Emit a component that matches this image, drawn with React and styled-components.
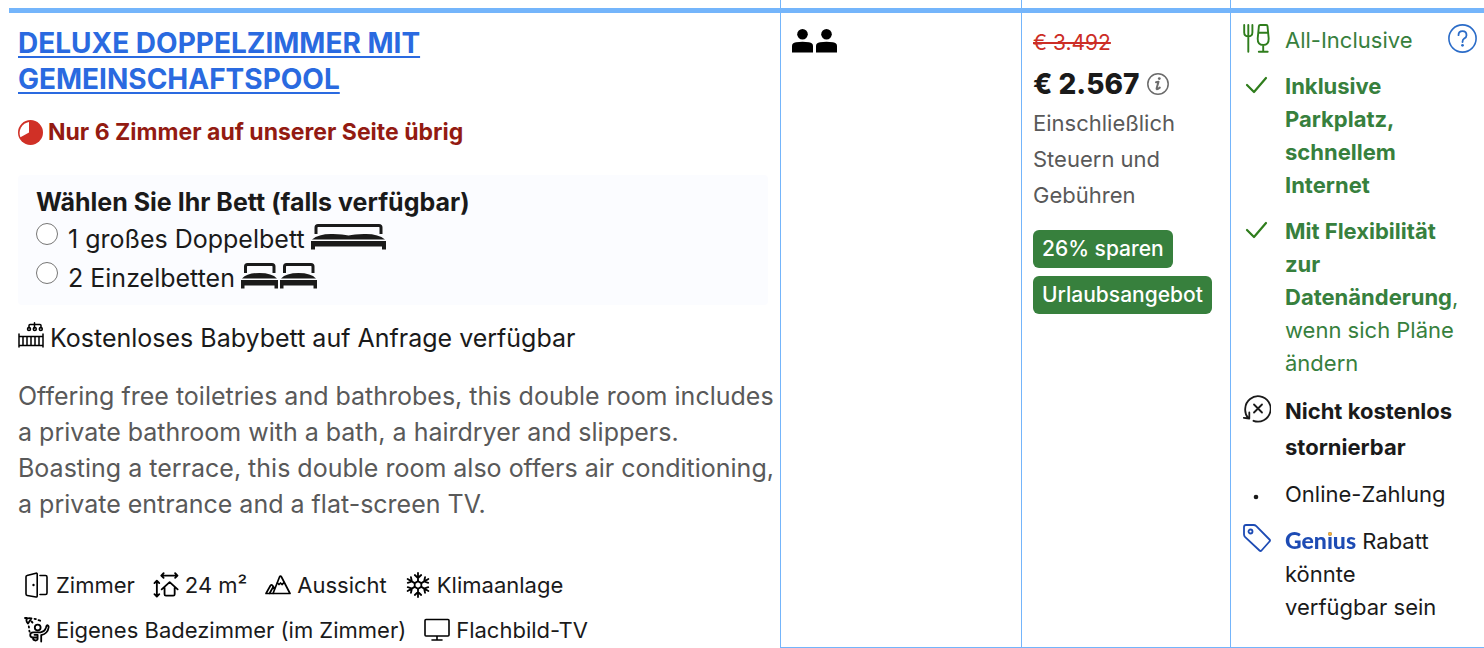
import React from "react";
import styled, { createGlobalStyle, css } from "styled-components";

const color = {
  line: "#74b5fb",
  link: "#2a6ae0",
  text: "#1a1a1a",
  muted: "#595959",
  green: "#37803d",
  iconGreen: "#2f7d1c",
  danger: "#931b12",
  strike: "#cc2d25",
  genius: "#1d4bb4",
  geniusDot: "#f8b133",
  help: "#2b6cc8",
};

const GlobalStyle = createGlobalStyle`
  * { box-sizing: border-box; }
  body {
    margin: 0;
    background: #fff;
    color: ${color.text};
    font-family: Inter, "Liberation Sans", sans-serif;
    font-size: 22px;
    line-height: 36px;
  }
`;

const RoomTable = styled.table`
  width: calc(100% - 9px);
  margin-left: 9px;
  border-collapse: separate;
  border-spacing: 0;
  table-layout: fixed;
`;

const Column = styled.col`
  width: ${(p) => p.$width || "auto"};
`;

const SpacerCell = styled.td`
  height: 8px;
  padding: 0;
  border-left: ${(p) => (p.$first ? "0" : `1px solid ${color.line}`)};
`;

const Cell = styled.td`
  vertical-align: top;
  border-top: 5px solid ${color.line};
  padding: ${(p) => p.$padding};
  ${(p) =>
    !p.$first &&
    css`
      border-left: 1px solid ${color.line};
      border-bottom: 1px solid ${color.line};
    `}
`;

const Icon = styled.svg`
  display: block;
  flex: none;
  fill: none;
  stroke: currentColor;
  stroke-linecap: round;
  stroke-linejoin: round;
`;

const RoomName = styled.h3`
  margin: 0;
  max-width: 480px;
  font-size: 28px;
  font-weight: 700;
  line-height: 36px;
`;

const RoomLink = styled.a`
  color: ${color.link};
  text-decoration: underline;
  text-decoration-thickness: 2px;
  text-underline-offset: 3px;
`;

const Scarcity = styled.p`
  display: flex;
  align-items: center;
  gap: 5px;
  margin: 17px 0 25px;
  color: ${color.danger};
  font-size: 23px;
  font-weight: 700;
`;

const BedChoice = styled.fieldset`
  margin: 0 8px 0 0;
  min-width: 0;
  padding: 9px 18px 7px;
  border: 0;
  border-radius: 4px;
  background: #fbfcff;
`;

const BedTitle = styled.legend`
  float: left;
  width: 100%;
  padding: 0;
  font-size: 25px;
  font-weight: 700;
`;

const BedOption = styled.label`
  display: flex;
  clear: both;
  align-items: flex-start;
  gap: 10px;
  height: 39px;
  font-size: 25px;
  line-height: 39px;
`;

const BedRadio = styled.input`
  flex: none;
  width: 22px;
  height: 22px;
  margin: 3px 0 0;
`;

const BedLabel = styled.span`
  display: flex;
  gap: 6px;
`;

const BedIcon = styled(Icon)`
  margin-top: 4px;
`;

const CribNote = styled.p`
  display: flex;
  align-items: center;
  gap: 6px;
  margin: 15px 0 22px;
  font-size: 25px;
`;

const CribDrawing = styled(Icon)`
  margin-bottom: 6px;
`;

const Description = styled.p`
  margin: 0;
  color: ${color.muted};
  font-size: 25px;
`;

const Features = styled.ul`
  display: flex;
  flex-wrap: wrap;
  gap: 9px 18px;
  max-width: 620px;
  margin: 45px 0 0;
  padding: 0 0 0 6px;
  list-style: none;
`;

const Feature = styled.li`
  display: flex;
  align-items: center;
  gap: 6px;
`;

const Guests = styled.div`
  display: flex;
  gap: 3px;
  color: #000;
`;

const OldPrice = styled.del`
  display: block;
  color: ${color.strike};
  font-size: 21px;
  text-decoration-thickness: 2px;
`;

const PriceLine = styled.div`
  display: flex;
  align-items: center;
  gap: 8px;
  margin-top: 2px;
  line-height: 42px;
`;

const Price = styled.strong`
  font-size: 28px;
  font-weight: 800;
`;

const IconButton = styled.button`
  display: flex;
  align-self: ${(p) => p.$align || "center"};
  padding: 0;
  border: 0;
  background: none;
  color: ${(p) => p.$color};
  cursor: pointer;
`;

const TaxNote = styled.p`
  max-width: 160px;
  margin: 0 0 17px;
  color: ${color.muted};
`;

const Badges = styled.div`
  display: flex;
  flex-direction: column;
  align-items: flex-start;
  gap: 8px;
`;

const Badge = styled.span`
  padding: 0 9px;
  border-radius: 6px;
  background: ${color.green};
  color: #fff;
  font-size: 21px;
  font-weight: 500;
  line-height: 38px;
`;

const Conditions = styled.ul`
  display: flex;
  flex-direction: column;
  gap: 13px;
  margin: 0;
  padding: 0;
  list-style: none;
`;

const Condition = styled.li`
  display: flex;
  gap: 14px;
  color: ${(p) => p.$color || color.text};
  line-height: ${(p) => p.$lineHeight || "33px"};
`;

const ConditionIcon = styled.span`
  display: flex;
  flex: none;
  justify-content: center;
  width: 28px;
  height: 33px;
  color: ${(p) => p.$color};
`;

const ConditionText = styled.span`
  flex: 1;
  min-width: 0;
  padding-right: 16px;
`;

/* The wordmark's i carries a yellow dot: the only ink above the x-height after "Ge". */
const Genius = styled.span`
  background:
    linear-gradient(${color.geniusDot}, ${color.geniusDot}) 36px 0 / 100% 10px no-repeat,
    ${color.genius};
  background-clip: text;
  color: transparent;
  font-family: Lato, sans-serif;
  font-size: 23px;
  font-weight: 900;
`;

const DoubleBed = () => (
  <BedIcon width="75" height="26" viewBox="0 0 75 26" aria-hidden="true">
    <path d="M5 10V3.500q0-2 2-2H68q2 0 2 2V10" strokeWidth="3" strokeLinecap="butt" />
    <path d="M1 15.500Q8 9.500 22 10q10 .3 15.500 1.500Q43 10.300 53 10q14-.5 21 5.500z" fill="currentColor" stroke="none" />
    <path d="M0 17H75V25.500H71V22.500H4V25.500H0z" fill="currentColor" stroke="none" />
  </BedIcon>
);

const TwinBeds = () => (
  <BedIcon width="76" height="26" viewBox="0 0 76 26" aria-hidden="true">
    {[0, 39].map((x) => (
      <g key={x} transform={`translate(${x} 0)`}>
        <path d="M4.500 10V3.500q0-2 2-2H31q2 0 2 2V10" strokeWidth="3" strokeLinecap="butt" />
        <path d="M1 15.500Q6 10 18.500 10T36 15.500z" fill="currentColor" stroke="none" />
        <path d="M0 17H37V25.500H33.500V22.500H3.500V25.500H0z" fill="currentColor" stroke="none" />
      </g>
    ))}
  </BedIcon>
);

const ScarcityIcon = () => (
  <Icon width="25" height="25" viewBox="0 0 25 25" color="#d03026" aria-hidden="true">
    <circle cx="12.500" cy="12.500" r="12.500" fill="currentColor" stroke="none" />
    <path d="M11 2V12.500L2.400 17.200A11.200 11.200 0 0 1 11 2z" fill="#fff" stroke="none" />
  </Icon>
);

const CribIcon = () => (
  <CribDrawing width="26" height="26" viewBox="0 0 26 26" strokeWidth="1.500" color="#000" aria-hidden="true">
    <path d="M1 12V25M25 12V25M1 14.500H25M1 23.500H25M5 14.500V23.500M9 14.500V23.500M13 14.500V23.500M17 14.500V23.500M21 14.500V23.500" />
    <path d="M16.500 .8V6M11 6V3.500q0-1 1-1H22q1 0 1 1V6" />
    <circle cx="11" cy="7" r="1.500" />
    <circle cx="16.800" cy="7" r="1.500" />
    <circle cx="22.800" cy="7" r="1.500" />
  </CribDrawing>
);

const DoorIcon = () => (
  <Icon width="26" height="26" viewBox="0 0 26 26" strokeWidth="1.600" color="#000" aria-hidden="true">
    <path d="M3 3.500 12 1.200q1.200-.2 1.200 1V24q0 1.200-1.200 1L3.200 23.500Q2 23.300 2 22V4.800Q2 3.700 3 3.500z" />
    <path d="M16 3.500H21.500q1.500 0 1.500 1.500V21q0 1.500-1.500 1.500H16" />
    <circle cx="9.500" cy="13" r="1.200" fill="currentColor" stroke="none" />
  </Icon>
);

const SizeIcon = () => (
  <Icon width="26" height="26" viewBox="0 0 27 27" strokeWidth="1.900" color="#000" aria-hidden="true">
    <path d="M9 3.700H25M11 1.300 8.600 3.700 11 6.100M23 1.300 25.400 3.700 23 6.100" />
    <path d="M4 9.500V25M1.500 11.500 4 9 6.500 11.500M1.500 23 4 25.500 6.500 23" />
    <path d="M9 18 17.300 10.500 25.600 18M12 16V23q0 1.500 1.500 1.500H21q1.500 0 1.500-1.500V16" />
  </Icon>
);

const MountainIcon = () => (
  <Icon width="26" height="26" viewBox="0 0 26 26" strokeWidth="1.700" color="#000" aria-hidden="true">
    <path d="M8 21.500 14.500 5q1-1.600 2 0L25 21.500H1L5.500 13.500q1-1.200 2 0l1.500 3M4.500 21.500 8.400 14.500" />
    <path d="M12.500 11 14 12.500l1.500-1.500L17 12.500l2-1.800" />
  </Icon>
);

const SnowIcon = () => (
  <Icon width="26" height="26" viewBox="0 0 26 26" strokeWidth="1.800" color="#000" aria-hidden="true">
    <path d="M13 9.200 16.300 11.100V14.900L13 16.800 9.700 14.900V11.100z" />
    {[0, 60, 120, 180, 240, 300].map((angle) => (
      <path key={angle} d="M13 9.200V1M9.800 3 13 6 16.200 3" transform={`rotate(${angle} 13 13)`} />
    ))}
  </Icon>
);

const ShowerIcon = () => (
  <Icon width="26" height="26" viewBox="0 0 26 26" strokeWidth="1.800" color="#000" aria-hidden="true">
    <path d="M1 1H2.800M2.500 2.500Q3 .5 7.500 1.300L4 6.500Q2 4.500 2.500 2.500z" />
    <path d="M10.500 1.800l1.400.3M14.500 3.100l1.700.6M7.500 4.500l1 1M4.800 9.500l.2 1M5.300 13.700l.3 1" />
    <circle cx="13.700" cy="10.600" r="2.900" />
    <path d="M23.200 8.500Q25 8.300 24.600 10.500 23.800 16.500 17.200 18.200V24.500" />
    <path d="M23.200 8.500Q22.300 8.600 22 10.500 21 14.500 16.500 15.300H9.200Q6.200 15.500 6.200 18T9.200 20.500H13.600V17.800H10.500M8.800 20.500Q9 23.500 11.500 23.500 14 23.500 13.600 20.500" />
  </Icon>
);

const TvIcon = () => (
  <Icon width="26" height="26" viewBox="0 0 26 26" strokeWidth="1.600" color="#000" aria-hidden="true">
    <path d="M2 2.500H24Q25 2.500 25 3.500V18q0 1-1 1H2q-1 0-1-1V3.500Q1 2.500 2 2.500zM13 19V22.500M8 23H18" />
  </Icon>
);

const PersonIcon = () => (
  <Icon width="21" height="24" viewBox="0 0 21 24" aria-hidden="true">
    <circle cx="10.500" cy="5.300" r="5.300" fill="currentColor" stroke="none" />
    <path d="M0 23.500V17q0-3 4-3.700 6.500-1.200 13 0 4 .7 4 3.700v6.500z" fill="currentColor" stroke="none" />
  </Icon>
);

const InfoIcon = () => (
  <Icon width="22" height="22" viewBox="0 0 22 22" strokeWidth="1.500" aria-hidden="true">
    <circle cx="11" cy="11" r="10.200" />
    <path d="M9 9.300 11.500 8.800 9.600 15.500q-.2 1.200 1.600.3L12.800 14.600" strokeWidth="2" />
    <circle cx="12.300" cy="5.600" r="1.400" fill="currentColor" stroke="none" />
  </Icon>
);

const HelpIcon = () => (
  <Icon width="29" height="29" viewBox="0 0 29 29" strokeWidth="1.600" aria-hidden="true">
    <circle cx="14.500" cy="14.500" r="13.600" />
    <path d="M10.500 11.200q0-4 4-4t4 4q0 2-2.300 3.400-1.700 1-1.700 3.400" strokeWidth="1.800" />
    <circle cx="14.500" cy="21.300" r="1.400" fill="currentColor" stroke="none" />
  </Icon>
);

const MealIcon = () => (
  <Icon width="28" height="29" viewBox="0 0 28 29" strokeWidth="1.900" aria-hidden="true">
    <path d="M1.200 1V8.500q0 3.800 4.100 3.800T9.400 8.500V1M5.300 1V27.800" />
    <path d="M17.200 1H23.200q1.200 0 1.300 1.200L25.700 14.500Q25.900 21 20.200 21T14.700 14.500L15.900 2.200Q16 1 17.200 1zM15.400 8.800H25M20.200 21V27.500M15.800 27.800H24.700" />
  </Icon>
);

const CheckIcon = () => (
  <Icon width="28" height="29" viewBox="0 0 28 29" strokeWidth="2.200" aria-hidden="true">
    <path d="M4 15 11 22 23 8" />
  </Icon>
);

const NoRefundIcon = () => (
  <Icon width="28" height="33" viewBox="0 0 28 33" strokeWidth="1.800" aria-hidden="true">
    <path d="M5.500 25.500Q1.500 21 2.300 15A12.700 12.700 0 1 1 10.500 27.800M6.300 19.500V25.500L.8 24.800" />
    <path d="M11 11.500 19 19.500M19 11.500 11 19.500" />
  </Icon>
);

const TagIcon = () => (
  <Icon width="28" height="28" viewBox="0 0 28 28" strokeWidth="1.800" aria-hidden="true">
    <path d="M1 3Q1 1 3 1H10.500q1.600 0 2.800 1.200L26.500 15.500q1 1 0 2L18.500 26.500q-1 1-2 0L2.200 13.200Q1 12 1 10.500z" />
    <circle cx="7.500" cy="7.500" r="2" />
  </Icon>
);

const DotIcon = () => (
  <Icon width="28" height="33" viewBox="0 0 28 33" aria-hidden="true">
    <circle cx="13" cy="19" r="2.300" fill="currentColor" stroke="none" />
  </Icon>
);

const features = [
  [DoorIcon, "Zimmer"],
  [SizeIcon, "24 m²"],
  [MountainIcon, "Aussicht"],
  [SnowIcon, "Klimaanlage"],
  [ShowerIcon, "Eigenes Badezimmer (im Zimmer)"],
  [TvIcon, "Flachbild-TV"],
];

const beds = [
  ["double", "1 großes Doppelbett", DoubleBed],
  ["twin", "2 Einzelbetten", TwinBeds],
];

export default function App() {
  return (
    <>
      <GlobalStyle />
      <RoomTable>
        <colgroup>
          <Column />
          <Column $width="241px" />
          <Column $width="209px" />
          <Column $width="254px" />
        </colgroup>
        <tbody>
          <tr>
            <SpacerCell $first />
            <SpacerCell />
            <SpacerCell />
            <SpacerCell />
          </tr>
          <tr>
            <Cell $first $padding="12px 4px 0 9px">
              <RoomName>
                <RoomLink href="#room">DELUXE DOPPELZIMMER MIT GEMEINSCHAFTSPOOL</RoomLink>
              </RoomName>
              <Scarcity>
                <ScarcityIcon />
                Nur 6 Zimmer auf unserer Seite übrig
              </Scarcity>
              <BedChoice>
                <BedTitle>Wählen Sie Ihr Bett (falls verfügbar)</BedTitle>
                {beds.map(([id, label, Drawing]) => (
                  <BedOption key={id} htmlFor={id}>
                    <BedRadio type="radio" name="bed" id={id} />
                    <BedLabel>
                      {label}
                      <Drawing />
                    </BedLabel>
                  </BedOption>
                ))}
              </BedChoice>
              <CribNote>
                <CribIcon />
                Kostenloses Babybett auf Anfrage verfügbar
              </CribNote>
              <Description>
                Offering free toiletries and bathrobes, this double room includes a private bathroom with a bath, a
                hairdryer and slippers. Boasting a terrace, this double room also offers air conditioning, a private
                entrance and a flat-screen TV.
              </Description>
              <Features>
                {features.map(([Drawing, label]) => (
                  <Feature key={label}>
                    <Drawing />
                    {label}
                  </Feature>
                ))}
              </Features>
            </Cell>
            <Cell $padding="16px 11px">
              <Guests role="img" aria-label="2">
                <PersonIcon />
                <PersonIcon />
              </Guests>
            </Cell>
            <Cell $padding="12px 8px 11px 11px">
              <OldPrice>€ 3.492</OldPrice>
              <PriceLine>
                <Price>€ 2.567</Price>
                <IconButton type="button" $color="#6b6b6b" aria-label="Info">
                  <InfoIcon />
                </IconButton>
              </PriceLine>
              <TaxNote>Einschließlich Steuern und Gebühren</TaxNote>
              <Badges>
                <Badge>26% sparen</Badge>
                <Badge>Urlaubsangebot</Badge>
              </Badges>
            </Cell>
            <Cell $padding="11px 7px 11px 12px">
              <Conditions>
                <Condition $color={color.green}>
                  <ConditionIcon $color={color.iconGreen}>
                    <MealIcon />
                  </ConditionIcon>
                  <ConditionText>All-Inclusive</ConditionText>
                  <IconButton type="button" $color={color.help} $align="flex-start" aria-label="Hilfe">
                    <HelpIcon />
                  </IconButton>
                </Condition>
                <Condition $color={color.green}>
                  <ConditionIcon $color={color.iconGreen}>
                    <CheckIcon />
                  </ConditionIcon>
                  <ConditionText>
                    <b>Inklusive Parkplatz, schnellem Internet</b>
                  </ConditionText>
                </Condition>
                <Condition $color={color.green}>
                  <ConditionIcon $color={color.iconGreen}>
                    <CheckIcon />
                  </ConditionIcon>
                  <ConditionText>
                    <b>Mit Flexibilität zur Datenänderung</b>, wenn sich Pläne ändern
                  </ConditionText>
                </Condition>
                <Condition $lineHeight="36px">
                  <ConditionIcon>
                    <NoRefundIcon />
                  </ConditionIcon>
                  <ConditionText>
                    <b>Nicht kostenlos stornierbar</b>
                  </ConditionText>
                </Condition>
                <Condition>
                  <ConditionIcon>
                    <DotIcon />
                  </ConditionIcon>
                  <ConditionText>Online-Zahlung</ConditionText>
                </Condition>
                <Condition>
                  <ConditionIcon $color={color.genius}>
                    <TagIcon />
                  </ConditionIcon>
                  <ConditionText>
                    <Genius>Genius</Genius> Rabatt könnte verfügbar sein
                  </ConditionText>
                </Condition>
              </Conditions>
            </Cell>
          </tr>
        </tbody>
      </RoomTable>
    </>
  );
}
